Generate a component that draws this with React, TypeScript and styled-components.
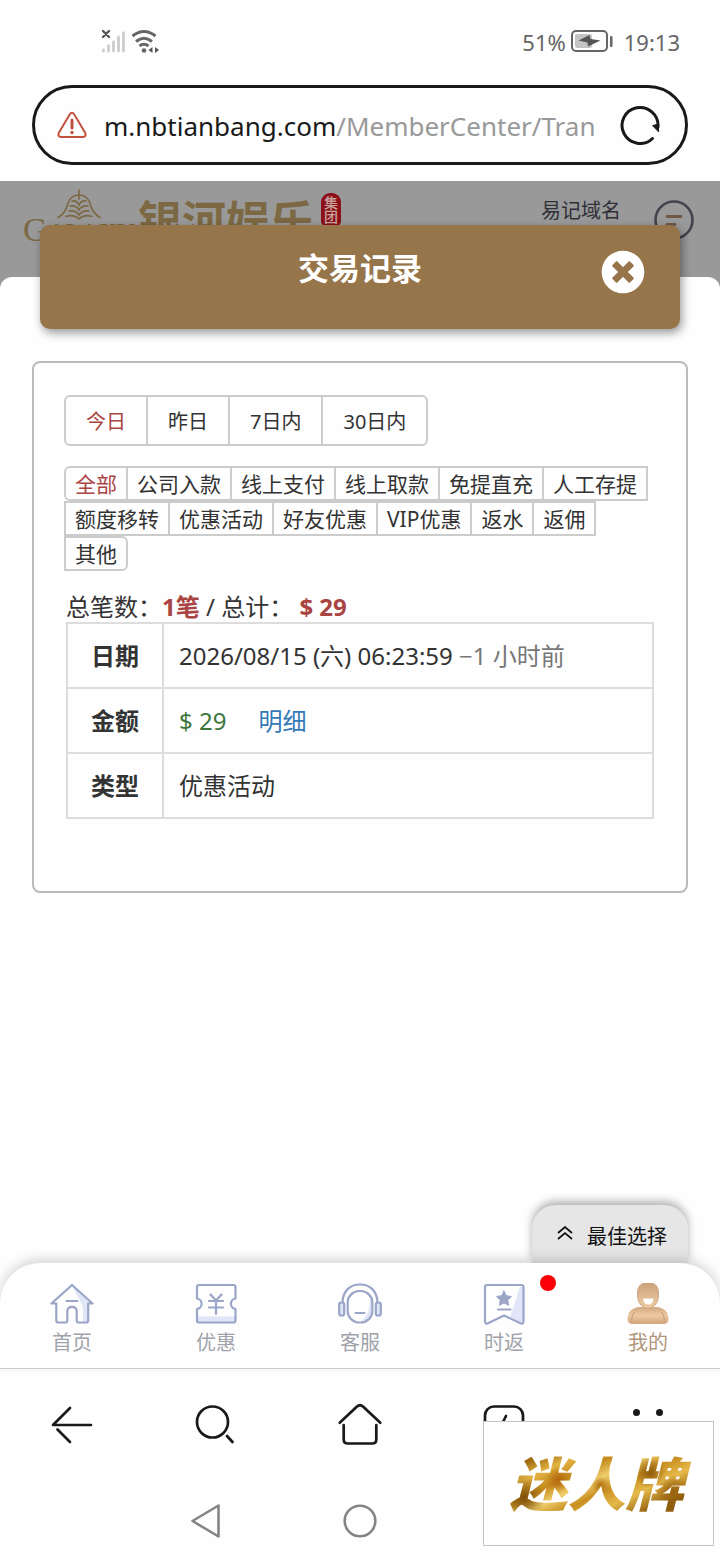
import React from 'react';
import styled, { createGlobalStyle } from 'styled-components';
import { FaTimesCircle } from 'react-icons/fa';

const GlobalStyle = createGlobalStyle`
  *, *::before, *::after { box-sizing: border-box; }
  body {
    margin: 0;
    background: #fefefe;
    color: #333;
    font-family: "Noto Sans", "Noto Sans CJK SC", sans-serif;
    font-size: 24px;
  }
  button, a { font: inherit; color: inherit; text-decoration: none; }
  button { margin: 0; padding: 0; border: 0; background: none; cursor: pointer; }
  svg { display: block; }
`;

const Page = styled.div`
  position: relative;
  display: flex;
  flex-direction: column;
  min-height: 100vh;
`;

/* Phone status bar */
const StatusBar = styled.header`
  display: flex;
  justify-content: space-between;
  align-items: center;
  height: 84px;
  padding: 0 40px 0 100px;
  color: #666;
  font-size: 22px;
`;

const StatusGroup = styled.div`
  display: flex;
  align-items: center;
  gap: 5px;
`;

const Clock = styled.time`
  margin-left: 6px;
`;

/* Browser address bar */
const AddressBar = styled.div`
  display: flex;
  align-items: center;
  gap: 16px;
  height: 80px;
  margin: 1px 32px 16px;
  padding: 0 25px 0 21px;
  border: 3px solid #191919;
  border-radius: 40px;
`;

const Address = styled.button`
  flex: 1;
  min-width: 0;
  padding-top: 2px;
  overflow: hidden;
  white-space: nowrap;
  text-align: left;
  font-size: 26px;
  line-height: 40px;
  color: #191919;
`;

const AddressPath = styled.span`
  color: #999;
`;

/* Site */
const SiteHeader = styled.div`
  display: flex;
  justify-content: space-between;
  align-items: flex-start;
  height: 108px;
  padding: 8px 26px 0 24px;
  background: #999;
`;

const Logo = styled.a`
  display: flex;
  align-items: flex-start;
  color: #7c6842;
`;

const LogoMark = styled.span`
  display: flex;
  flex-direction: column;
  align-items: center;
  width: 110px;
`;

const LogoLatin = styled.span`
  font-family: "Liberation Serif", serif;
  font-size: 25px;
  line-height: 18px;
  white-space: nowrap;

  &::first-letter { font-size: 34px; }
`;

const LogoName = styled.span`
  margin-left: 4px;
  font-size: 44px;
  font-weight: 700;
  line-height: 64px;
`;

const Seal = styled.span`
  display: flex;
  align-items: center;
  justify-content: center;
  width: 20px;
  height: 34px;
  margin: 4px 0 0 7px;
  border-radius: 9px 9px 6px 6px;
  background: #8d0f17;
  color: #c9a5a0;
  font-size: 14px;
  font-weight: 500;
  line-height: 14px;
  text-align: center;
`;

const HeaderLinks = styled.div`
  display: flex;
  align-items: flex-start;
  gap: 31px;
  color: #2f3038;
  font-size: 20px;
  line-height: 44px;
`;

const ChatButton = styled.button`
  margin-top: 11px;
`;

const Sheet = styled.main`
  position: relative;
  display: flex;
  flex: 1;
  flex-direction: column;
  margin-top: -12px;
  border-radius: 12px 12px 0 0;
  background: #fefefe;
`;

const TitleBar = styled.div`
  display: grid;
  grid-template-columns: 1fr auto 1fr;
  align-items: start;
  height: 104px;
  margin: -52px 40px 32px;
  padding: 25px 35px 0;
  border-radius: 10px;
  background: #97754b;
  box-shadow: 2px 4px 10px rgba(0, 0, 0, 0.4);
  color: #fff;
`;

const Title = styled.h1`
  grid-column: 2;
  margin: 0;
  font-size: 31px;
  font-weight: 700;
  line-height: 36px;
`;

const CloseButton = styled.button`
  justify-self: end;
  font-size: 44px;
`;

const Card = styled.section`
  margin: 0 32px;
  padding: 32px 30px 72px;
  border: 2px solid #bbb;
  border-radius: 8px;
`;

const ButtonGroup = styled.div`
  display: flex;
  flex-wrap: wrap;
`;

const Segment = styled.button<{ $active?: boolean }>`
  height: 51px;
  padding: 0 20px;
  border: 2px solid #ccc;
  font-size: 20px;
  color: ${(p) => (p.$active ? '#a94442' : '#333')};

  & + & { margin-left: -1px; }
  &:first-child { border-radius: 6px 0 0 6px; }
  &:last-child { border-radius: 0 6px 6px 0; }
  &:not(:last-child) { border-right-width: 1px; }
`;

const TypeFilter = styled(ButtonGroup)`
  margin: 20px 0 21px;
`;

const Chip = styled.button<{ $active?: boolean }>`
  height: 35px;
  margin-right: -2px;
  padding: 0 9px;
  border: 2px solid #ccc;
  font-size: 21px;
  line-height: 28px;
  color: ${(p) => (p.$active ? '#a94442' : '#333')};

  &:first-child { border-radius: 6px 0 0 6px; }
  &:last-child { border-radius: 0 6px 6px 0; }
`;

const Summary = styled.p`
  margin: 0 2px;
  line-height: 30px;

  strong { color: #a94442; }
`;

const Records = styled.table`
  width: calc(100% - 4px);
  margin: 0 2px;
  border-collapse: collapse;
  line-height: 36px;

  th, td {
    height: 65px;
    padding: 0 15px;
    border: 2px solid #ddd;
    text-align: left;
  }
  th {
    width: 96px;
    text-align: center;
  }
`;

const Muted = styled.span`
  color: #777;
`;

const Amount = styled.span`
  margin-right: 32px;
  color: #3c763d;
`;

const DetailLink = styled.a`
  && { color: #337ab7; }
`;

const BestChoice = styled.button`
  display: flex;
  align-items: center;
  align-self: flex-end;
  gap: 14px;
  height: 58px;
  margin: auto 32px 0 0;
  padding: 2px 21px 0 25px;
  border-radius: 24px 24px 0 0;
  background: #e6e6e6;
  box-shadow: 0 -4px 8px rgba(0, 0, 0, 0.3);
  color: #111;
  font-size: 20px;
`;

/* Bottom bars */
const TabBar = styled.nav`
  position: relative;
  display: grid;
  grid-template-columns: repeat(5, 1fr);
  height: 106px;
  border-bottom: 1px solid #ccc;
  border-radius: 40px 40px 0 0;
  background: #fefefe;
  box-shadow: 0 -4px 12px rgba(0, 0, 0, 0.16);
`;

const Tab = styled.a<{ $active?: boolean }>`
  && { color: ${(p) => (p.$active ? '#b0967a' : '#a0a2aa')}; }
  position: relative;
  display: flex;
  flex-direction: column;
  align-items: center;
  padding-top: 20px;
  font-size: 20px;
  line-height: 32px;
`;

const Dot = styled.span`
  position: absolute;
  top: 12px;
  left: calc(50% + 36px);
  width: 16px;
  height: 16px;
  border-radius: 50%;
  background: #fb0007;
`;

const BrowserBar = styled.nav`
  display: grid;
  grid-template-columns: repeat(5, 1fr);
  justify-items: center;
  align-items: center;
  height: 112px;
  background: #fefefe;
`;

const SystemBar = styled.nav`
  display: grid;
  grid-template-columns: repeat(3, 1fr);
  justify-items: center;
  align-items: center;
  height: 79px;
  padding: 0 18%;
  background: #fefefe;
`;

const Sponsor = styled.a`
  position: absolute;
  right: 6px;
  bottom: 14px;
  display: flex;
  align-items: center;
  justify-content: center;
  width: 231px;
  height: 125px;
  padding: 0 4px 6px 0;
  border: 1px solid #c4c4c4;
  background: #fff;
`;

const SponsorName = styled.span`
  padding: 0 8px;
  background:
    radial-gradient(circle at 30% 48%, #b5680f 0, rgba(181, 104, 15, 0) 9%),
    radial-gradient(circle at 12% 70%, #7d500b 0, rgba(125, 80, 11, 0) 12%),
    radial-gradient(circle at 52% 55%, #b0700f 0, rgba(176, 112, 15, 0) 8%),
    radial-gradient(circle at 78% 40%, #8f5c0c 0, rgba(143, 92, 12, 0) 10%),
    radial-gradient(circle at 90% 62%, #99620d 0, rgba(153, 98, 13, 0) 9%),
    linear-gradient(155deg, #a06a10 20%, #e3b443 30%, #c48a1c 40%, #f0cf6d 49%, #c88f20 58%, #e6b94a 68%, #8f5d0d 82%);
  background-clip: text;
  -webkit-background-clip: text;
  -webkit-text-fill-color: transparent;
  font-family: "Noto Sans CJK SC", sans-serif;
  font-size: 58px;
  font-style: italic;
  font-weight: 900;
  line-height: 84px;
`;

const SignalIcon = () => (
  <svg width="26" height="26" viewBox="0 0 26 26" fill="none" strokeLinecap="round">
    <path d="M3 2l6 6M9 2l-6 6" stroke="#555" strokeWidth="2.4" />
    <path d="M3.500 21v1M8.500 17v5M13.500 13v9M18.500 8v14M23.500 4v18" stroke="#ccc" strokeWidth="2.800" />
  </svg>
);

const WifiIcon = () => (
  <svg width="30" height="26" viewBox="0 0 30 26" fill="none" stroke="#666" strokeWidth="3">
    <path d="M1.500 7Q13 -2 24.500 7M5 12.500Q13 6 21 12.500M8.500 17Q13 13.500 17.500 17" />
    <circle cx="13" cy="21.500" r="2.300" fill="#666" stroke="none" />
    <path d="M21.500 18v6l-4-3zM24 18v6l4-3z" fill="#555" stroke="none" />
  </svg>
);

const BatteryIcon = () => (
  <svg width="42" height="24" viewBox="0 0 42 24">
    <rect x="1" y="1" width="35" height="20" rx="4" fill="none" stroke="#666" strokeWidth="2" />
    <rect x="4" y="4" width="17" height="14" rx="2" fill="#c4c4c4" />
    <path d="M7.500 10.500L18.500 5l1 4 10 1.500L17 16.500l-.5-4z" fill="#555" />
    <rect x="39" y="6" width="2.500" height="11" rx="1" fill="#666" />
  </svg>
);

const WarningIcon = () => (
  <svg width="32" height="32" viewBox="0 0 32 32" fill="none" stroke="#c4513f" strokeWidth="2" strokeLinejoin="round" strokeLinecap="round">
    <path d="M13.700 5.500Q16 1.800 18.300 5.500L29.300 24Q30.500 27.700 27 28H5Q1.500 27.700 2.700 24z" />
    <path d="M16 11v8" strokeWidth="3" />
    <circle cx="16" cy="23.500" r="1.700" fill="#c4513f" stroke="none" />
  </svg>
);

const ReloadIcon = () => (
  <svg width="40" height="40" viewBox="0 0 40 40" fill="none" stroke="#191919" strokeWidth="3" strokeLinecap="round">
    <path d="M32.500 33.500A18 18 0 1 1 38 22" />
    <path d="M33 20.500L38.500 19v7.500z" fill="#191919" strokeWidth="1" strokeLinejoin="round" />
  </svg>
);

const LotusIcon = () => (
  <svg width="46" height="32" viewBox="0 0 46 32" fill="none" stroke="#7c6842" strokeWidth="1.600" strokeLinecap="round">
    <path d="M23 1v9M2 28.500Q10 24 12 14Q15 6 23 6Q31 6 34 14Q36 24 44 28.500" />
    <path d="M10 27.500Q18 25 23 30Q28 25 36 27.500M13 22Q20 21 23 26Q26 21 33 22M14 17Q20 16 23 21Q26 16 32 17M16 12Q21 11 23 16Q25 11 30 12" />
  </svg>
);

const ChatIcon = () => (
  <svg width="42" height="42" viewBox="0 0 42 42" fill="none" strokeLinecap="round">
    <circle cx="22" cy="20" r="18.500" stroke="#41434d" strokeWidth="2.600" />
    <path d="M15 16.500h14M15 24.500h8" stroke="#6f5846" strokeWidth="2.800" />
  </svg>
);

const ChevronsIcon = () => (
  <svg width="16" height="18" viewBox="0 0 16 18" fill="none" stroke="#111" strokeWidth="1.700">
    <path d="M1 7l7-6L15 7M1 13l7-6 7 6" />
  </svg>
);

const TabSvg: React.FC<{ children: React.ReactNode }> = ({ children }) => (
  <svg width="44" height="44" viewBox="0 0 44 44" fill="none" stroke="#9aa5c8" strokeWidth="2.200" strokeLinecap="round" strokeLinejoin="round">
    {children}
  </svg>
);

const HomeTabIcon = () => (
  <TabSvg>
    <path d="M22 2l17 17v20h-6V24z" fill="#e0e5f7" stroke="none" />
    <path d="M22 2L1.500 20.500h4.800v17q0 2 2 2h7q2 0 2-2V28.500q0-4.700 4.700-4.700t4.700 4.700v9q0 2 2 2h7.500q2 0 2-2v-17h4.300z" />
    <path d="M16.500 18h11" />
  </TabSvg>
);

const TicketTabIcon = () => (
  <TabSvg>
    <path d="M3 33.500h38v5.500H3z" fill="#e0e5f7" stroke="none" />
    <path d="M3 4q0-2 2-2h34.500q2 0 2 2v11.500a5.300 5.300 0 0 0 0 10.500v11.500q0 2-2 2H5q-2 0-2-2V26a5.300 5.300 0 0 0 0-10.500z" />
    <path d="M16.500 11.500l5.500 6 5.500-6M15 18h14M15 24.500h14M22 18v13" />
  </TabSvg>
);

const ServiceTabIcon = () => (
  <TabSvg>
    <path d="M33 12v18q-2 8-11 9 8-6 9-14z" fill="#e0e5f7" stroke="none" />
    <rect x="1.200" y="19.500" width="5" height="13" rx="2" fill="#e0e5f7" />
    <rect x="37.800" y="19.500" width="5" height="13" rx="2" fill="#e0e5f7" />
    <path d="M4.500 19C5 8 12 1.500 22 1.500S39 8 39.500 19" />
    <rect x="9.700" y="8" width="24.600" height="31.500" rx="11.500" />
    <path d="M17.500 30h9" />
  </TabSvg>
);

const RebateTabIcon = () => (
  <TabSvg>
    <path d="M38 4h3v36l-13-6z" fill="#e0e5f7" stroke="none" />
    <path d="M3 4q0-2 2-2h34.500q2 0 2 2v34q0 4-3.500 2L22 32.500 6.500 40Q3 42 3 38z" />
    <path d="M22 8l2.300 4.700 5.200.8-3.800 3.600.9 5.200-4.600-2.400-4.600 2.400.9-5.200-3.800-3.600 5.200-.8z" fill="#9aa5c8" strokeWidth="1" />
    <path d="M16 26.500h12.500" />
  </TabSvg>
);

const MineTabIcon = () => (
  <svg width="44" height="44" viewBox="0 0 44 44">
    <defs>
      <linearGradient id="skin" x1="0" y1="0" x2="0" y2="1">
        <stop offset="0" stopColor="#c9a27c" />
        <stop offset="1" stopColor="#f0cda6" />
      </linearGradient>
      <linearGradient id="torso" x1="0" y1="0" x2="0" y2="1">
        <stop offset="0" stopColor="#d2a983" />
        <stop offset=".5" stopColor="#ecc8a0" />
        <stop offset="1" stopColor="#d3a67b" />
      </linearGradient>
    </defs>
    <path d="M1.500 36C1.500 29 6 24.500 14 24h16c8 .5 12.500 5 12.500 12q0 5-5 5h-31q-5 0-5-5z" fill="url(#torso)" />
    <path d="M6 39q-1-7 3-10M38 39q1-7-3-10" fill="none" stroke="#c49a72" strokeWidth="1" />
    <path d="M11.500 9Q12-.5 22-.5T32.500 9Q33 18 29 22 22 28.500 15 22 11 18 11.500 9z" fill="url(#skin)" stroke="#cfa882" strokeWidth="1" />
    <path d="M17 15.500h10.500q-.5 6-5.200 6T17 15.500z" fill="#fff" />
  </svg>
);

const BarSvg: React.FC<{ children: React.ReactNode }> = ({ children }) => (
  <svg width="48" height="48" viewBox="0 0 48 48" fill="none" stroke="#191919" strokeWidth="2.700" strokeLinecap="round" strokeLinejoin="round">
    {children}
  </svg>
);

const SystemSvg: React.FC<{ children: React.ReactNode }> = ({ children }) => (
  <svg width="40" height="40" viewBox="0 0 40 40" fill="none" stroke="#858585" strokeWidth="2.600" strokeLinejoin="round">
    {children}
  </svg>
);

const periods = ['今日', '昨日', '7日内', '30日内'];
const types = [
  '全部', '公司入款', '线上支付', '线上取款', '免提直充', '人工存提',
  '额度移转', '优惠活动', '好友优惠', 'VIP优惠', '返水', '返佣', '其他',
];
const tabs = [
  { label: '首页', icon: <HomeTabIcon /> },
  { label: '优惠', icon: <TicketTabIcon /> },
  { label: '客服', icon: <ServiceTabIcon /> },
  { label: '时返', icon: <RebateTabIcon />, dot: true },
  { label: '我的', icon: <MineTabIcon />, active: true },
];

export default function App() {
  return (
    <Page>
      <GlobalStyle />
      <StatusBar>
        <StatusGroup>
          <SignalIcon />
          <WifiIcon />
        </StatusGroup>
        <StatusGroup>
          <span>51%</span>
          <BatteryIcon />
          <Clock>19:13</Clock>
        </StatusGroup>
      </StatusBar>

      <AddressBar>
        <WarningIcon />
        <Address type="button">
          m.nbtianbang.com<AddressPath>/MemberCenter/Tran</AddressPath>
        </Address>
        <button type="button" aria-label="刷新"><ReloadIcon /></button>
      </AddressBar>

      <SiteHeader>
        <Logo href="#home">
          <LogoMark>
            <LotusIcon />
            <LogoLatin>GALAXY</LogoLatin>
          </LogoMark>
          <LogoName>银河娱乐</LogoName>
          <Seal>集团</Seal>
        </Logo>
        <HeaderLinks>
          <a href="#domain">易记域名</a>
          <ChatButton type="button" aria-label="消息"><ChatIcon /></ChatButton>
        </HeaderLinks>
      </SiteHeader>

      <Sheet>
        <TitleBar>
          <Title>交易记录</Title>
          <CloseButton type="button" aria-label="关闭"><FaTimesCircle /></CloseButton>
        </TitleBar>

        <Card>
          <ButtonGroup>
            {periods.map((label, i) => (
              <Segment key={label} type="button" $active={i === 0}>{label}</Segment>
            ))}
          </ButtonGroup>
          <TypeFilter>
            {types.map((label, i) => (
              <Chip key={label} type="button" $active={i === 0}>{label}</Chip>
            ))}
          </TypeFilter>
          <Summary>
            总笔数：<strong>1笔</strong> / 总计： <strong>$ 29</strong>
          </Summary>
          <Records>
            <tbody>
              <tr>
                <th scope="row">日期</th>
                <td>2026/08/15 (六) 06:23:59 <Muted>−1 小时前</Muted></td>
              </tr>
              <tr>
                <th scope="row">金额</th>
                <td><Amount>$ 29</Amount><DetailLink href="#detail">明细</DetailLink></td>
              </tr>
              <tr>
                <th scope="row">类型</th>
                <td>优惠活动</td>
              </tr>
            </tbody>
          </Records>
        </Card>

        <BestChoice type="button"><ChevronsIcon />最佳选择</BestChoice>
      </Sheet>

      <TabBar>
        {tabs.map((tab) => (
          <Tab key={tab.label} href="#" $active={tab.active}>
            {tab.icon}
            {tab.label}
            {tab.dot && <Dot />}
          </Tab>
        ))}
      </TabBar>

      <BrowserBar>
        <button type="button" aria-label="返回">
          <BarSvg><path d="M43 24H5L22 7M9.500 28.500L22 41" /></BarSvg>
        </button>
        <button type="button" aria-label="搜索">
          <BarSvg><circle cx="20.500" cy="21" r="15.500" /><path d="M35 35l5.500 6" /></BarSvg>
        </button>
        <button type="button" aria-label="主页">
          <BarSvg><path d="M3.700 21.700L21 5.500q3-2.500 6 0l17.300 16.200M7.700 24v14.500q0 4 4 4h24.600q4 0 4-4V24" /></BarSvg>
        </button>
        <button type="button" aria-label="标签页">
          <BarSvg><rect x="5" y="5.500" width="38" height="37" rx="9" /><path d="M26 15l-3.500 7" /></BarSvg>
        </button>
        <button type="button" aria-label="更多">
          <BarSvg>
            <g fill="#191919" stroke="none">
              <circle cx="12.500" cy="11.500" r="3.500" />
              <circle cx="35.500" cy="11.500" r="3.500" />
              <circle cx="12.500" cy="35.500" r="3.500" />
              <circle cx="35.500" cy="35.500" r="3.500" />
            </g>
          </BarSvg>
        </button>
      </BrowserBar>

      <SystemBar>
        <button type="button" aria-label="后退">
          <SystemSvg><path d="M6.500 20L32.500 4.500v31z" /></SystemSvg>
        </button>
        <button type="button" aria-label="桌面">
          <SystemSvg><circle cx="20" cy="20" r="15.300" /></SystemSvg>
        </button>
      </SystemBar>

      <Sponsor href="#sponsor"><SponsorName>迷人牌</SponsorName></Sponsor>
    </Page>
  );
}
